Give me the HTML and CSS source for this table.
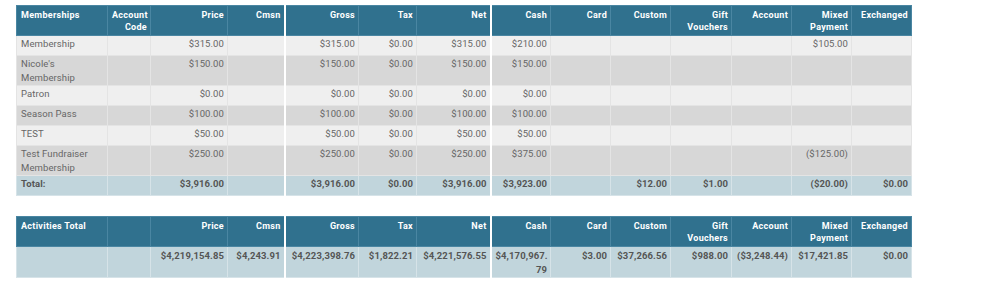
FILE: index.html
```html
<!DOCTYPE html>
<html>
<head>
<meta charset="utf-8">
<link rel="stylesheet" href="styles.css">
</head>
<body>
<div class="page">
<table class="report">
  <colgroup>
    <col class="c-name"><col class="c-code"><col class="c-price"><col class="c-cmsn"><col class="c-gross"><col class="c-tax"><col class="c-net"><col class="c-pay"><col class="c-pay"><col class="c-pay"><col class="c-gift"><col class="c-pay"><col class="c-pay"><col class="c-pay">
  </colgroup>
  <thead>
    <tr>
      <th class="left">Memberships</th>
      <th>Account Code</th>
      <th>Price</th>
      <th>Cmsn</th>
      <th class="grp">Gross</th>
      <th>Tax</th>
      <th>Net</th>
      <th class="grp">Cash</th>
      <th>Card</th>
      <th>Custom</th>
      <th>Gift Vouchers</th>
      <th>Account</th>
      <th>Mixed Payment</th>
      <th>Exchanged</th>
    </tr>
  </thead>
  <tbody>
    <tr class="odd">
      <td class="left">Membership</td><td></td><td>$315.00</td><td></td>
      <td class="grp">$315.00</td><td>$0.00</td><td>$315.00</td>
      <td class="grp">$210.00</td><td></td><td></td><td></td><td></td><td>$105.00</td><td></td>
    </tr>
    <tr class="even">
      <td class="left">Nicole's Membership</td><td></td><td>$150.00</td><td></td>
      <td class="grp">$150.00</td><td>$0.00</td><td>$150.00</td>
      <td class="grp">$150.00</td><td></td><td></td><td></td><td></td><td></td><td></td>
    </tr>
    <tr class="odd">
      <td class="left">Patron</td><td></td><td>$0.00</td><td></td>
      <td class="grp">$0.00</td><td>$0.00</td><td>$0.00</td>
      <td class="grp">$0.00</td><td></td><td></td><td></td><td></td><td></td><td></td>
    </tr>
    <tr class="even">
      <td class="left">Season Pass</td><td></td><td>$100.00</td><td></td>
      <td class="grp">$100.00</td><td>$0.00</td><td>$100.00</td>
      <td class="grp">$100.00</td><td></td><td></td><td></td><td></td><td></td><td></td>
    </tr>
    <tr class="odd">
      <td class="left">TEST</td><td></td><td>$50.00</td><td></td>
      <td class="grp">$50.00</td><td>$0.00</td><td>$50.00</td>
      <td class="grp">$50.00</td><td></td><td></td><td></td><td></td><td></td><td></td>
    </tr>
    <tr class="even">
      <td class="left">Test Fundraiser Membership</td><td></td><td>$250.00</td><td></td>
      <td class="grp">$250.00</td><td>$0.00</td><td>$250.00</td>
      <td class="grp">$375.00</td><td></td><td></td><td></td><td></td><td>($125.00)</td><td></td>
    </tr>
    <tr class="total">
      <td class="left">Total:</td><td></td><td>$3,916.00</td><td></td>
      <td class="grp">$3,916.00</td><td>$0.00</td><td>$3,916.00</td>
      <td class="grp">$3,923.00</td><td></td><td>$12.00</td><td>$1.00</td><td></td><td>($20.00)</td><td>$0.00</td>
    </tr>
  </tbody>
</table>

<table class="report second">
  <colgroup>
    <col class="c-name"><col class="c-code"><col class="c-price"><col class="c-cmsn"><col class="c-gross"><col class="c-tax"><col class="c-net"><col class="c-pay"><col class="c-pay"><col class="c-pay"><col class="c-gift"><col class="c-pay"><col class="c-pay"><col class="c-pay">
  </colgroup>
  <thead>
    <tr>
      <th class="left">Activities Total</th>
      <th></th>
      <th>Price</th>
      <th>Cmsn</th>
      <th class="grp">Gross</th>
      <th>Tax</th>
      <th>Net</th>
      <th class="grp">Cash</th>
      <th>Card</th>
      <th>Custom</th>
      <th>Gift Vouchers</th>
      <th>Account</th>
      <th>Mixed Payment</th>
      <th>Exchanged</th>
    </tr>
  </thead>
  <tbody>
    <tr class="total big">
      <td class="left"></td><td></td><td>$4,219,154.85</td><td>$4,243.91</td>
      <td class="grp">$4,223,398.76</td><td>$1,822.21</td><td>$4,221,576.55</td>
      <td class="grp">$4,170,967.<br>79</td><td>$3.00</td><td>$37,266.56</td><td>$988.00</td><td>($3,248.44)</td><td>$17,421.85</td><td>$0.00</td>
    </tr>
  </tbody>
</table>
</div>
</body>
</html>
```

FILE: styles.css
```css
html, body {
  margin: 0;
  padding: 0;
  background: #ffffff;
}

.page {
  padding: 5px 0 0 16px;
  font-family: Roboto, "Liberation Sans", Arial, sans-serif;
}

.report {
  border-collapse: collapse;
  table-layout: fixed;
  width: 896px;
  font-size: 9.5px;
}

.report.second {
  margin-top: 20px;
}

.c-name { width: 91px; }
.c-code { width: 43px; }
.c-price { width: 77px; }
.c-cmsn { width: 57px; }
.c-gross { width: 74px; }
.c-tax { width: 58px; }
.c-net { width: 74px; }
.c-pay { width: 60px; }
.c-gift { width: 61px; }

.report th {
  background: #30718e;
  color: #ffffff;
  font-size: 9px;
  font-weight: 700;
  text-align: right;
  vertical-align: top;
  line-height: 12px;
  height: 29px;
  box-sizing: border-box;
  padding: 3px 3px 2px 4px;
  border: 1px solid #4a86a2;
  letter-spacing: 0.3px;
}

.report td {
  color: #666666;
  text-align: right;
  vertical-align: top;
  line-height: 14px;
  height: 20px;
  box-sizing: border-box;
  padding: 1px 3px 0 4px;
  border: 1px solid #e4e4e4;
  letter-spacing: 0.1px;
  white-space: normal;
}

.report .left {
  text-align: left;
}

.report th.grp,
.report td.grp {
  border-left: 2px solid #ffffff;
}

.report tr.odd td {
  background: #efefef;
}

.report tr.even td {
  background: #d7d7d7;
}

.report tr.total td {
  background: #c1d5dc;
  color: #555555;
  font-weight: 700;
  border-color: #d6e3e8;
}

.report tr.big td {
  height: 30px;
  padding-top: 2px;
  white-space: nowrap;
}

.report tr.total td.grp {
  border-left-color: #ffffff;
}
```
